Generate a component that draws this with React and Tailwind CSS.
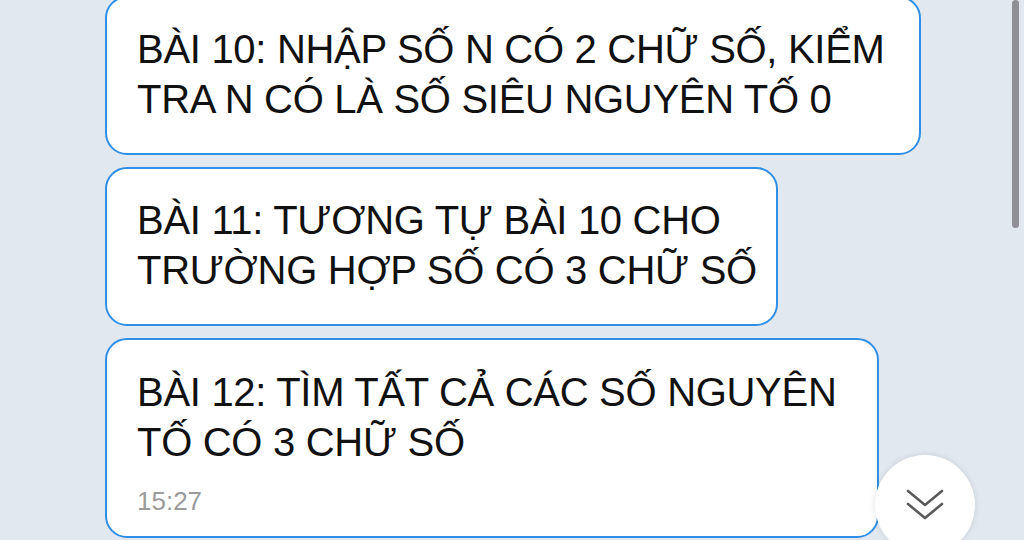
export default function App() {
  const bubbles = [
    { w: 'w-[816px]', lines: ['BÀI 10: NHẬP SỐ N CÓ 2 CHỮ SỐ, KIỂM', 'TRA N CÓ LÀ SỐ SIÊU NGUYÊN TỐ 0'] },
    { w: 'w-[673px]', lines: ['BÀI 11: TƯƠNG TỰ BÀI 10 CHO', 'TRƯỜNG HỢP SỐ CÓ 3 CHỮ SỐ'] },
    { w: 'w-[774px]', lines: ['BÀI 12: TÌM TẤT CẢ CÁC SỐ NGUYÊN', 'TỐ CÓ 3 CHỮ SỐ'], time: '15:27' },
  ]

  return (
    <div className="relative w-[1024px] h-[540px] overflow-hidden bg-[#e2e8f0] font-['Liberation_Sans',Arial,sans-serif]">
      <div className="flex flex-col items-start gap-[12px] pl-[105px] -mt-[4px]">
        {bubbles.map((b, i) => (
          <div
            key={i}
            className={`${b.w} rounded-[22px] border-2 border-[#2f8fe6] bg-white pl-[30px] ${b.time ? 'pt-[27px] pb-[19px]' : 'pt-[26px] pb-[29px]'}`}
          >
            <div className="text-[40px] leading-[50px] tracking-[-0.3px] text-[#111] whitespace-nowrap">
              {b.lines.map((l, j) => (
                <div key={j}>{l}</div>
              ))}
            </div>
            {b.time && (
              <div className="mt-[18px] text-[26px] leading-[32px] text-[#9b9b9b]">{b.time}</div>
            )}
          </div>
        ))}
      </div>

      {/* scroll indicator */}
      <div className="absolute right-[5px] top-0 w-[7px] h-[228px] rounded-full bg-[#8e9096]" />

      {/* scroll to bottom */}
      <div className="absolute left-[875px] top-[455px] w-[100px] h-[100px] rounded-full bg-white shadow-[0_0_6px_rgba(0,0,0,0.12)] flex justify-center pt-[32px]">
        <svg width="40" height="36" viewBox="0 0 40 36" fill="none" stroke="#5a5a5a" strokeWidth="2.6" strokeLinecap="round" strokeLinejoin="round">
          <polyline points="3,4 20,18 37,4" />
          <polyline points="3,17 20,31 37,17" />
        </svg>
      </div>
    </div>
  )
}
